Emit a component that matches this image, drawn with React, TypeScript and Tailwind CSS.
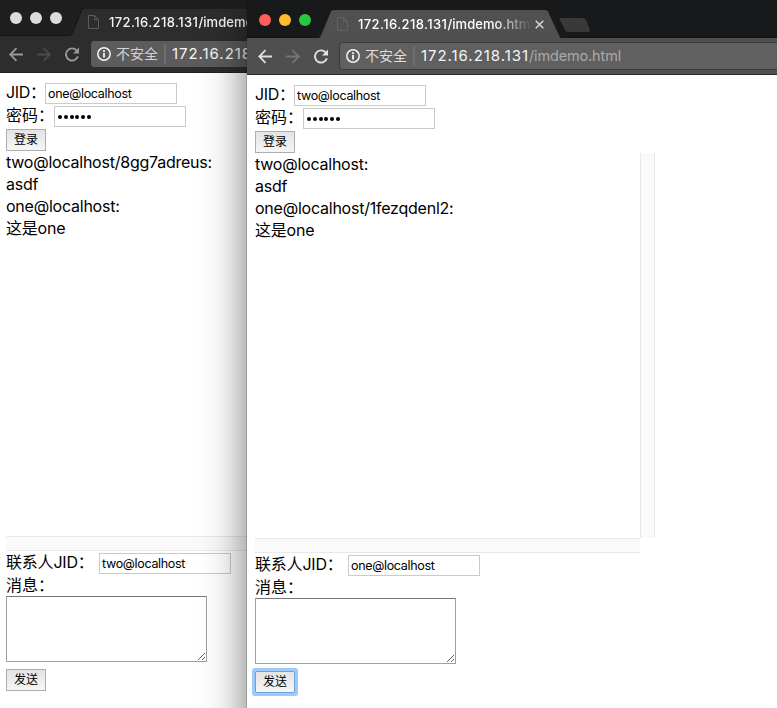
type WindowData = {
  active: boolean;
  jid: string;
  contact: string;
  messages: string[];
};

const back: WindowData = {
  active: false,
  jid: "one@localhost",
  contact: "two@localhost",
  messages: ["two@localhost/8gg7adreus:", "asdf", "one@localhost:", "这是one"],
};

const front: WindowData = {
  active: true,
  jid: "two@localhost",
  contact: "one@localhost",
  messages: ["two@localhost:", "asdf", "one@localhost/1fezqdenl2:", "这是one"],
};

function TitleBar({ active }: { active: boolean }) {
  const lights = active
    ? ["bg-[#ff5f57]", "bg-[#ffbd2e]", "bg-[#28c941]"]
    : ["bg-[#dcdcdc]", "bg-[#dcdcdc]", "bg-[#dcdcdc]"];
  return (
    <div className={`flex h-[38px] items-start border-b ${active ? "border-[#131415] bg-[#18191b]" : "border-[#141414] bg-[#1e1e1e]"}`}>
      <div className="flex w-[72px] shrink-0 gap-2 pt-[14px] pl-3">
        {lights.map((c, i) => (
          <span key={i} className={`size-3 shrink-0 rounded-full ${c}`} />
        ))}
      </div>
      <div className="relative mt-[10px] flex h-7 w-[242px] shrink-0 items-center">
        <svg className="absolute inset-0" width="242" height="28" viewBox="0 0 242 28">
          <path d="M0 28 L1.5 26.5 L12 1.5 Q12.8 0 14.5 0 H226.5 Q228.2 0 229 1.5 L240.5 26.5 L242 28 Z" fill={active ? "#505050" : "#2d2d2d"} />
          {!active && (
            <path d="M0 27.5 L1.5 26.5 L12 1.7 Q12.8 0 14.5 0 H226.5" fill="none" stroke="#121212" strokeWidth="1" />
          )}
        </svg>
        <svg className="relative ml-[18px] shrink-0" width="11" height="14" viewBox="0 0 11 14" fill="none" stroke={active ? "#626262" : "#5c5c5c"}>
          <path d="M.5 .5H6.5L10.5 4.5V13.5H.5ZM6.5 .5V4.5H10.5" />
        </svg>
        <span className={`relative -mt-px ml-[10px] w-[172px] overflow-hidden text-[13px] leading-[18px] font-medium whitespace-nowrap ${active ? "text-white" : "text-[#f4f4f4]"} [mask-image:linear-gradient(to_right,black_136px,transparent_174px)]`}>
          <span className="tracking-[0.4px]">172.16.218.131</span>
          <span className="tracking-[0.05px]">/imdemo.html</span>
        </span>
        <svg className="relative ml-[5px] shrink-0" width="9" height="9" viewBox="0 0 9 9" stroke="#d2d2d2" strokeWidth="1.6">
          <path d="M.7 .7 8.3 8.3M8.3 .7 .7 8.3" />
        </svg>
      </div>
      <svg className="mt-[17px] -ml-[3px] shrink-0" width="34" height="16" viewBox="0 0 34 16">
        <path d="M3 1H25Q27 1 28 3L32 13Q32 15 30 15H10Q8 15 7 13L2 3Q1 1 3 1Z" fill={active ? "#393939" : "#2b2b2b"} />
      </svg>
    </div>
  );
}

function Toolbar({ active }: { active: boolean }) {
  const strong = active ? "#e0e0e0" : "#999999";
  const weak = active ? "#757575" : "#4b4b4b";
  return (
    <div className={`flex h-[37px] items-start border-b pt-1 pl-[11px] ${active ? "border-[#292929] bg-[#4f4f4f]" : "border-[#202020] bg-[#2d2d2d]"}`}>
      <svg className="mt-[7px] shrink-0" width="15" height="15" viewBox="0 0 15 15" fill="none" stroke={strong} strokeWidth="1.8">
        <path d="M14 7.5H1.5M7.5 1.2 1.2 7.5 7.5 13.8" />
      </svg>
      <svg className="mt-[7px] ml-[13px] shrink-0" width="15" height="15" viewBox="0 0 15 15" fill="none" stroke={weak} strokeWidth="1.8">
        <path d="M0 7.5H12.5M6.5 1.2 12.8 7.5 6.5 13.8" />
      </svg>
      <svg className="mt-[7px] ml-[13px] shrink-0" width="15" height="15" viewBox="0 0 15 15" fill="none" stroke={strong} strokeWidth="1.9">
        <path d="M12.9 9.4A6.1 6.1 0 1 1 11.6 3.3" />
        <path d="M14 .5V6.5H8Z" fill={strong} stroke="none" />
      </svg>
      <div className={`ml-[10px] flex h-7 w-[700px] shrink-0 items-center rounded-[4px] border ${active ? "border-[#3c3c3c] bg-[#606060]" : "border-[#2c2c2c] bg-[#5c5c5c]"}`}>
        <svg className="ml-[6px] shrink-0" width="14" height="14" viewBox="0 0 14 14" fill="none" stroke="#f5f5f5">
          <circle cx="7" cy="7" r="6.2" strokeWidth="1.5" />
          <path d="M7 6V10.6M7 3.2V5" strokeWidth="1.8" />
        </svg>
        <span className={`ml-[5px] w-[42px] text-[14px] leading-5 whitespace-nowrap ${active ? "text-[#dedede]" : "text-[#d4d4d4]"}`}>不安全</span>
        <span className="ml-[6px] h-5 w-0.5 bg-[#6e6e6e]" />
        <span className="ml-[6px] text-[15px] leading-5 whitespace-nowrap text-[#f5f5f5]">
          <span className="tracking-[0.95px]">172.16.218.131</span>
          <span className="text-[14.5px] tracking-[-0.15px] text-[#a9a9a9]">/imdemo.html</span>
        </span>
      </div>
    </div>
  );
}

function Field({ value, dots }: { value: string; dots?: boolean }) {
  return (
    <div className="flex h-[21px] w-[132px] shrink-0 items-center border border-[#cacaca] bg-white pl-[2px] text-[12.5px] leading-none text-black">
      {dots ? (
        <span className="flex gap-[1.8px] pl-px" role="img">
          {[0, 1, 2, 3, 4, 5].map((i) => (
            <span key={i} className="size-[4px] rounded-full bg-black" />
          ))}
        </span>
      ) : (
        <span className="pt-px tracking-[-0.32px]">{value}</span>
      )}
    </div>
  );
}

function Button({ label, focused }: { label: string; focused?: boolean }) {
  return (
    <button
      className={`flex h-[22px] w-10 items-center justify-center border bg-linear-to-b from-[#e4e4e4] to-[#f6f6f6] text-[12px] leading-none text-black ${focused ? "rounded-[1px] border-[#6ea3da] shadow-[0_0_0_3px_#9ccafc]" : "border-[#adadad]"}`}
    >
      {label}
    </button>
  );
}

function Page({ data }: { data: WindowData }) {
  return (
    <div className="flex h-[660px] flex-col bg-white pt-2 pl-2 text-[16px] leading-[22px] text-black">
      <div className="flex h-6 pt-[2px]">
        <span className="-mt-[2px] w-[39px] tracking-[-0.3px] whitespace-nowrap">JID：</span>
        <Field value={data.jid} />
      </div>
      <div className="flex h-[23px] pt-px">
        <span className="-mt-[2px] w-12 whitespace-nowrap">密码：</span>
        <Field value="" dots />
      </div>
      <div className="h-[23px] pt-px">
        <Button label="登录" />
      </div>
      <div className="flex h-[385px]">
        <div className="w-[385px] tracking-[-0.23px]">
          {data.messages.map((m) => (
            <div key={m} className="h-[22px] whitespace-nowrap">{m}</div>
          ))}
        </div>
        <div className="w-[15px] border-x border-[#e8e8e8] bg-[#fafafa]" />
      </div>
      <div className="h-[15px] w-[385px] border-y border-[#e8e8e8] bg-[#fafafa]" />
      <div className="flex h-6 pt-[2px]">
        <span className="-mt-[2px] w-[93px] tracking-[-0.2px] whitespace-nowrap">联系人JID：</span>
        <Field value={data.contact} />
      </div>
      <div className="h-[21px] leading-[20px]">消息：</div>
      <div className="flex h-[66px] w-[201px] items-end justify-end border border-[#a0a0a0] border-t-[#777]">
        <svg width="9" height="9" viewBox="0 0 9 9" stroke="#666" strokeWidth="1">
          <path d="M1 8 8 1M5 8 8 5" />
        </svg>
      </div>
      <div className="mt-[7px]">
        <Button label="发送" focused={data.active} />
      </div>
    </div>
  );
}

function BrowserWindow({ data }: { data: WindowData }) {
  return (
    <div className="w-[760px] overflow-hidden rounded-t-[5px]">
      <TitleBar active={data.active} />
      <Toolbar active={data.active} />
      <Page data={data} />
    </div>
  );
}

export default function App() {
  return (
    <div className="relative h-[708px] w-[777px] overflow-hidden bg-[#1e1e1e] font-['Inter','Noto_Sans_CJK_SC',sans-serif]">
      <div className="absolute -top-[2px] -left-[2px]">
        <BrowserWindow data={back} />
      </div>
      <div className="absolute top-0 left-[247px] rounded-t-[5px] shadow-[0_0_0_1px_rgba(0,0,0,0.15),0_16px_44px_rgba(0,0,0,0.55)]">
        <BrowserWindow data={front} />
      </div>
    </div>
  );
}
